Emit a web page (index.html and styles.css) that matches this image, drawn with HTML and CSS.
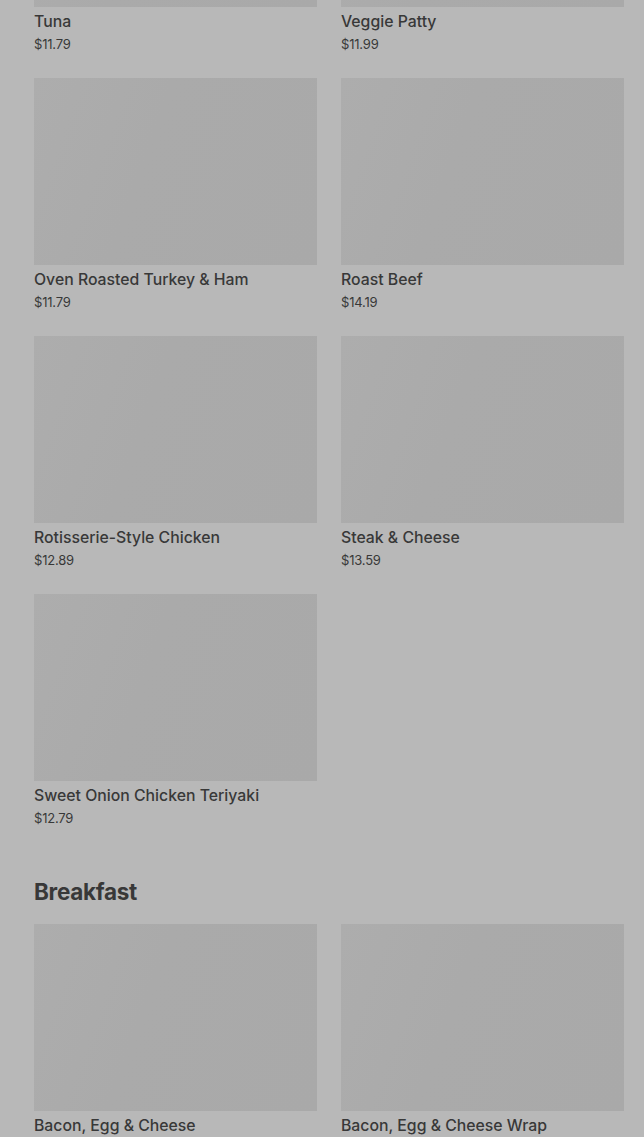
FILE: index.html
```html
<!DOCTYPE html>
<html lang="en">
	<head>
		<meta charset="utf-8">
		<meta name="viewport" content="width=device-width,initial-scale=1">
		<title>Menu</title>
		<link rel="stylesheet" href="styles.css">
	</head>
	<body>
		<main class="menu">
			<section class="menu-section">
				<div class="menu-grid">
					<a class="item" href="#">
						<div class="item__image"></div>
						<h3 class="item__name">Tuna</h3>
						<p class="item__price">$11.79</p>
					</a>
					<a class="item" href="#">
						<div class="item__image"></div>
						<h3 class="item__name">Veggie Patty</h3>
						<p class="item__price">$11.99</p>
					</a>
					<a class="item" href="#">
						<div class="item__image"></div>
						<h3 class="item__name">Oven Roasted Turkey &amp; Ham</h3>
						<p class="item__price">$11.79</p>
					</a>
					<a class="item" href="#">
						<div class="item__image"></div>
						<h3 class="item__name">Roast Beef</h3>
						<p class="item__price">$14.19</p>
					</a>
					<a class="item" href="#">
						<div class="item__image"></div>
						<h3 class="item__name">Rotisserie-Style Chicken</h3>
						<p class="item__price">$12.89</p>
					</a>
					<a class="item" href="#">
						<div class="item__image"></div>
						<h3 class="item__name">Steak &amp; Cheese</h3>
						<p class="item__price">$13.59</p>
					</a>
					<a class="item" href="#">
						<div class="item__image"></div>
						<h3 class="item__name">Sweet Onion Chicken Teriyaki</h3>
						<p class="item__price">$12.79</p>
					</a>
				</div>
			</section>

			<section class="menu-section">
				<h2 class="menu-section__title">Breakfast</h2>
				<div class="menu-grid">
					<a class="item" href="#">
						<div class="item__image"></div>
						<h3 class="item__name">Bacon, Egg &amp; Cheese</h3>
						<p class="item__price">$7.49</p>
					</a>
					<a class="item" href="#">
						<div class="item__image"></div>
						<h3 class="item__name">Bacon, Egg &amp; Cheese Wrap</h3>
						<p class="item__price">$8.49</p>
					</a>
				</div>
			</section>
		</main>
	</body>
</html>
```

FILE: styles.css
```css
/* PAGE */
* {
	box-sizing: border-box;
}
body {
	background-color: #b8b8b8;
	color: #383838;
	font-family: Inter, 'Noto Sans', sans-serif;
	margin: 0;
	overflow: hidden;
}
h2,
h3,
p {
	margin: 0;
}

/* MENU */
.menu {
	margin-block-start: -180px;
	padding-inline: 34px 20px;
}
.menu-section + .menu-section {
	margin-block-start: 48px;
}
.menu-section__title {
	font-size: 22.5px;
	font-weight: 700;
	letter-spacing: -0.3px;
	line-height: 32px;
	margin-block-end: 16px;
}
.menu-grid {
	display: grid;
	gap: 24px 24px;
	grid-template-columns: 1fr 1fr;
}

/* ITEM CARD */
.item {
	color: inherit;
	display: block;
	text-decoration: none;
}
.item__image {
	background: linear-gradient(110deg, #adadad 0%, #aaaaaa 40%, #a9a9a9 100%);
	height: 187px;
}
.item__name {
	font-size: 15.8px;
	font-weight: 500;
	line-height: 22px;
	margin-block-start: 4px;
}
.item__price {
	font-size: 13px;
	letter-spacing: -0.2px;
	line-height: 20px;
	margin-block-start: 1px;
}
```
